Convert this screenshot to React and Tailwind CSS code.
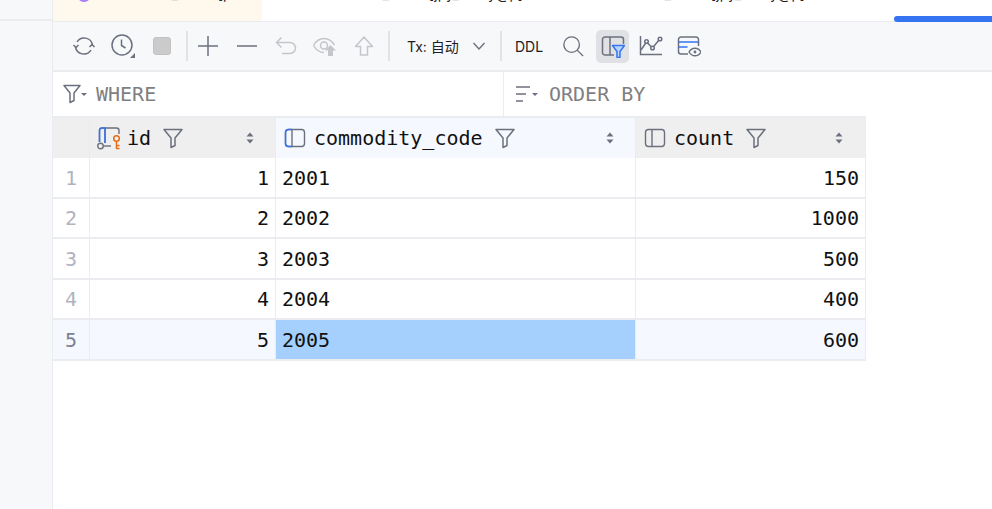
const MONO = "font-['DejaVu_Sans_Mono',monospace]";

const Ico = ({ size = 24, children, className = "" }) => (
  <svg width={size} height={size} viewBox="0 0 24 24" fill="none" stroke="#6c707e" strokeWidth="1.5" className={className}>
    {children}
  </svg>
);

const ToolBtn = ({ children }) => (
  <div className="w-[39px] h-[34px] flex items-center justify-center shrink-0">{children}</div>
);

const Sep = ({ className = "" }) => <div className={`w-[2px] h-[30px] bg-[#e2e3e8] shrink-0 ${className}`} />;

const FilterIcon = () => (
  <svg width="22" height="22" viewBox="0 0 22 22" fill="none" stroke="#6c707e" strokeWidth="1.5" className="shrink-0">
    <path d="M2 2.5h18l-7 8.5v7.5l-4 2v-9.5z" strokeLinejoin="round" />
  </svg>
);

const SortIcon = () => (
  <svg width="10" height="14" viewBox="0 0 10 14" className="shrink-0">
    <path d="M5 1.5L8.5 5.5H1.5z" fill="#6c707e" />
    <path d="M5 12.5L8.5 8.5H1.5z" fill="#6c707e" />
  </svg>
);

const ColumnIcon = ({ accent }) => (
  <svg width="22" height="20" viewBox="0 0 22 20" fill="none" className="shrink-0">
    <rect x="1.5" y="1.5" width="19" height="17" rx="3" stroke="#6c707e" strokeWidth="1.4" />
    <path d="M8 1.5v17" stroke="#6c707e" strokeWidth="1.4" />
    {accent && <path d="M8 1.5H4.5a3 3 0 0 0-3 3v11a3 3 0 0 0 3 3H8" stroke="#3574f0" strokeWidth="1.5" />}
  </svg>
);

const KeyColumnIcon = () => (
  <svg width="25" height="24" viewBox="0 0 25 24" fill="none" className="shrink-0">
    <path d="M2.5 16V4.5a2.5 2.5 0 0 1 2.5-2.5h14.5a2.5 2.5 0 0 1 2.5 2.5V8" stroke="#6c707e" strokeWidth="1.4" />
    <path d="M8 2v15" stroke="#6c707e" strokeWidth="1.4" />
    <path d="M2.5 16V4.5A2.5 2.5 0 0 1 5 2h3v15" stroke="#3574f0" strokeWidth="1.5" />
    <circle cx="3.5" cy="20" r="2.8" stroke="#6c707e" strokeWidth="1.4" />
    <path d="M7 20h7" stroke="#6c707e" strokeWidth="1.4" />
    <circle cx="19.5" cy="12.5" r="2.8" stroke="#e66d17" strokeWidth="1.5" />
    <path d="M19.5 15.5V23M19.5 19.5h3M19.5 22.5h3" stroke="#e66d17" strokeWidth="1.5" />
  </svg>
);

const columns = [
  { w: "w-[186px]", name: "id", bg: "bg-[#efefef]", icon: <KeyColumnIcon />, pad: "pl-[7px]", gap: "ml-[5px]", fgap: "ml-[11px]", sortR: "pr-[20px]" },
  { w: "w-[360px]", name: "commodity_code", bg: "bg-[#f5f8fe]", icon: <ColumnIcon accent />, pad: "pl-[8px]", gap: "ml-[8px]", fgap: "ml-[11px]", sortR: "pr-[20px]" },
  { w: "w-[230px]", name: "count", bg: "bg-[#efefef]", icon: <ColumnIcon />, pad: "pl-[8px]", gap: "ml-[8px]", fgap: "ml-[11px]", sortR: "pr-[21px]" },
];

const rows = [
  { n: 1, id: 1, code: 2001, count: 150, h: "h-[41px]" },
  { n: 2, id: 2, code: 2002, count: 1000, h: "h-[40px]" },
  { n: 3, id: 3, code: 2003, count: 500, h: "h-[41px]" },
  { n: 4, id: 4, code: 2004, count: 400, h: "h-[40px]" },
  { n: 5, id: 5, code: 2005, count: 600, h: "h-[41px]", selected: true },
];

export default function App() {
  return (
    <div className="w-[992px] h-[509px] flex bg-white overflow-hidden">
      {/* left rail */}
      <div className="w-[53px] shrink-0 bg-[#f7f8fa] border-r border-[#ebecf0]">
        <div className="h-[21px] border-b-2 border-[#ebecf0]" />
      </div>

      <div className="flex-1 flex flex-col min-w-0">
        {/* tabs, only the bottom edge of their text is in view */}
        <div className="h-[22px] flex border-b border-[#ebecf0] shrink-0 font-['Inter',sans-serif] text-[14px] text-[#1f2024] whitespace-pre leading-[18px]">
          <div className="w-[209px] h-[21px] bg-[#fff8ec] flex overflow-hidden pl-[24px]">
            <div className="w-[14px] h-[14px] rounded-full bg-[#a97cf8] -mt-[12px] shrink-0" />
            <div className="-mt-[15px] ml-[76px]">t_stock [p</div>
          </div>
          <div className="w-[632px] h-[21px] overflow-hidden flex">
            <div className="-mt-[15px] ml-[116px]">t_stock [jpy_study@p]</div>
            <div className="-mt-[15px] ml-[137px]">t_stock [jpy_study@p]</div>
          </div>
          <div className="flex-1 flex items-end">
            <div className="h-[6px] w-full bg-[#3574f0] rounded-l-[3px] -mb-px" />
          </div>
        </div>

        {/* toolbar */}
        <div className="h-[50px] shrink-0 bg-[#f7f8fa] border-b-2 border-[#ebecf0] flex items-center pl-[11px]">
          <ToolBtn>
            <Ico>
              <path d="M20.5 11a8.5 8.5 0 0 0-15.5-3.2M3.5 13a8.5 8.5 0 0 0 15.5 3.2" />
              <path d="M1.5 11l2.5 2.5L6.5 11M17.5 13l2.5-2.5 2.5 2.5" strokeLinejoin="round" />
            </Ico>
          </ToolBtn>
          <ToolBtn>
            <svg width="26" height="26" viewBox="0 0 26 26" fill="none" stroke="#6c707e" strokeWidth="1.5">
              <circle cx="12" cy="12" r="10" />
              <path d="M11.5 6.5v6l4 2.5" />
              <path d="M25 20v5h-5z" fill="#6c707e" stroke="none" />
            </svg>
          </ToolBtn>
          <ToolBtn>
            <div className="w-[18px] h-[18px] rounded-[3px] bg-[#cbcbcb] border border-[#c2c2c2]" />
          </ToolBtn>
          <Sep className="ml-[5px]" />
          <ToolBtn>
            <Ico>
              <path d="M12 2v20M2 12h20" />
            </Ico>
          </ToolBtn>
          <ToolBtn>
            <Ico>
              <path d="M2 12h20" />
            </Ico>
          </ToolBtn>
          <ToolBtn>
            <svg width="24" height="24" viewBox="0 0 24 24" fill="none" stroke="#c4c6cc" strokeWidth="1.5">
              <path d="M7.5 3.5L2.5 8.5l5 5M2.5 8.5h13.5a5.5 5.5 0 0 1 0 11H8" />
            </svg>
          </ToolBtn>
          <ToolBtn>
            <svg width="26" height="24" viewBox="0 0 26 24" fill="none" stroke="#c4c6cc" strokeWidth="1.5">
              <path d="M1.5 11.5C4 7 8 4.5 12 4.5s8 2.5 10.5 6.5M1.5 11.5C4 16 7.5 18.5 12 18.5" />
              <circle cx="12" cy="11.5" r="3.5" />
              <path d="M18.5 11l5.5 5.5h-3V22h-5v-5.500h-3z" fill="#c4c6cc" stroke="none" />
            </svg>
          </ToolBtn>
          <ToolBtn>
            <svg width="22" height="24" viewBox="0 0 22 24" fill="none" stroke="#c4c6cc" strokeWidth="1.5">
              <path d="M11 3l8.500 9.500h-5V21h-7v-8.500h-5z" strokeLinejoin="round" />
            </svg>
          </ToolBtn>
          <Sep className="ml-[5px]" />
          <span className="ml-[17px] w-[56px] shrink-0 text-[14px] text-[#1f2024] font-['Inter','Noto_Sans_CJK_SC',sans-serif] whitespace-nowrap">Tx: 自动</span>
          <div className="ml-[9px] w-[14px] flex justify-center shrink-0">
            <svg width="14" height="10" viewBox="0 0 14 10" fill="none" stroke="#6c707e" strokeWidth="1.4">
              <path d="M1.500 2l5.500 6 5.500-6" />
            </svg>
          </div>
          <Sep className="ml-[14px]" />
          <span className="ml-[13px] w-[31px] shrink-0 text-[14px] text-[#1f2024] font-['Inter',sans-serif]">DDL</span>
          <div className="ml-[15px] w-[24px] flex justify-center shrink-0">
            <Ico size={22}>
              <circle cx="10.500" cy="10.500" r="8.500" />
              <path d="M16.500 16.500L23 23" />
            </Ico>
          </div>
          <div className="ml-[11px] w-[33px] h-[33px] rounded-[5px] bg-[#dfe1e5] flex items-center justify-center shrink-0">
            <svg width="24" height="24" viewBox="0 0 24 24" fill="none">
              <path d="M13 21H4a2.500 2.500 0 0 1-2.500-2.500v-13A2.500 2.500 0 0 1 4 3h16a2.500 2.500 0 0 1 2.500 2.500V10M9 3v18" stroke="#6c707e" strokeWidth="1.5" />
              <path d="M11.500 11.500h12l-4.500 6v6h-3v-6z" fill="#b9d4fb" stroke="#3574f0" strokeWidth="1.5" strokeLinejoin="round" />
            </svg>
          </div>
          <div className="ml-[9px] w-[26px] flex justify-center shrink-0">
            <svg width="24" height="22" viewBox="0 0 24 22" fill="none" stroke="#6c707e" strokeWidth="1.5">
              <path d="M1.500 1v18.500H23" />
              <path d="M2 15l5.500-8 6 6 6.500-8" />
              <circle cx="7.500" cy="6.500" r="1.800" fill="#f7f8fa" />
              <circle cx="13.500" cy="13" r="1.800" fill="#f7f8fa" />
              <circle cx="21" cy="4" r="1.800" fill="#f7f8fa" />
            </svg>
          </div>
          <div className="ml-[12px] w-[26px] flex justify-center shrink-0">
            <svg width="24" height="24" viewBox="0 0 24 24" fill="none">
              <path d="M11 20H4a2.500 2.500 0 0 1-2.500-2.500v-12A2.500 2.500 0 0 1 4 3h15a2.500 2.500 0 0 1 2.500 2.500V12" stroke="#6c707e" strokeWidth="1.5" />
              <path d="M1.500 8h20" stroke="#3574f0" strokeWidth="1.5" />
              <path d="M1.500 13h9" stroke="#3574f0" strokeWidth="1.5" />
              <path d="M12 18c1.500-2.600 3.500-3.800 6-3.800s4.500 1.200 6 3.800c-1.500 2.600-3.500 3.800-6 3.800s-4.500-1.200-6-3.800z" fill="#f7f8fa" stroke="#6c707e" strokeWidth="1.4" />
              <circle cx="18" cy="18" r="1.400" fill="#6c707e" />
            </svg>
          </div>
        </div>

        {/* where / order by */}
        <div className={`h-[44px] shrink-0 flex items-center text-[20px] text-[#7f7f82] ${MONO}`}>
          <div className="w-[451px] h-full flex items-center pl-[10px] border-r border-[#ebecf0]">
            <svg width="24" height="20" viewBox="0 0 24 20" fill="none" stroke="#6c707e" strokeWidth="1.500" className="shrink-0">
              <path d="M1 1.500h16l-6 7.500v7.500l-4 2V9z" strokeLinejoin="round" />
              <path d="M18 9h6l-3 3z" fill="#6c707e" stroke="none" />
            </svg>
            <span className="ml-[9px]">WHERE</span>
          </div>
          <div className="flex-1 h-full flex items-center pl-[11px]">
            <svg width="24" height="20" viewBox="0 0 24 20" fill="none" stroke="#6c707e" strokeWidth="1.500" className="shrink-0">
              <path d="M1 3h14M1 10h10M1 17h7" />
              <path d="M17 9h6l-3 3z" fill="#6c707e" stroke="none" />
            </svg>
            <span className="ml-[10px]">ORDER BY</span>
          </div>
        </div>

        {/* result grid */}
        <div className={`border-t-2 border-[#ebecf0] w-[813px] text-[20px] text-[#111] ${MONO}`}>
          <div className="flex h-[40px] border-r border-[#ebecf0]">
            <div className="w-[37px] shrink-0 bg-[#efefef] border-r border-[#ebecf0]" />
            {columns.map((c) => (
              <div key={c.name} className={`${c.w} ${c.bg} ${c.pad} ${c.sortR} shrink-0 flex items-center border-r border-[#ebecf0]`}>
                {c.icon}
                <span className={c.gap}>{c.name}</span>
                <span className={c.fgap}><FilterIcon /></span>
                <span className="ml-auto"><SortIcon /></span>
              </div>
            ))}
          </div>
          {rows.map((r) => {
            const rowBg = r.selected ? "bg-[#f5f8fe]" : "bg-white";
            return (
              <div key={r.n} className={`flex ${r.h} border-b-2 border-r border-[#ebecf0] ${rowBg}`}>
                <div className={`w-[37px] shrink-0 flex items-center justify-center border-r border-[#ebecf0] ${r.selected ? "text-[#7e8290]" : "text-[#b0b4c0]"}`}>{r.n}</div>
                <div className="w-[186px] shrink-0 flex items-center justify-end pr-[6px] border-r border-[#ebecf0]">{r.id}</div>
                <div className={`w-[360px] shrink-0 flex items-center pl-[6px] border-r border-[#ebecf0] ${r.selected ? "bg-[#a5d0fe]" : ""}`}>{r.code}</div>
                <div className="w-[229px] shrink-0 flex items-center justify-end pr-[6px]">{r.count}</div>
              </div>
            );
          })}
        </div>
      </div>
    </div>
  );
}
